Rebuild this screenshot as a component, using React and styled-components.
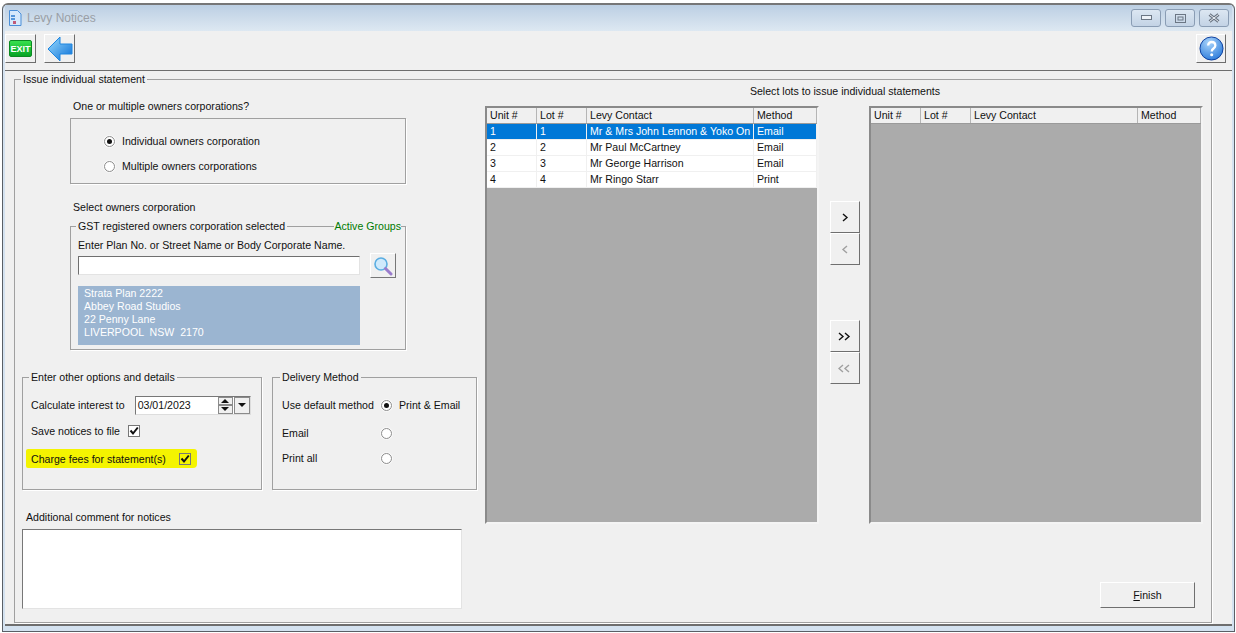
import React from 'react';
import styled, { createGlobalStyle } from 'styled-components';

const Global = createGlobalStyle`
  * { box-sizing: border-box; }
  html, body { margin: 0; background: #fff; }
  body { font-family: "Liberation Sans", Arial, sans-serif; font-size: 10.6px; color: #111; }
`;

const Screen = styled.div`
  width: 1236px;
  height: 633px;
  padding: 3px 1px 0 2px;
  overflow: hidden;
`;

const Frame = styled.div`
  height: 629px;
  border: 1px solid #5a5f66;
  border-top: 2px solid #777;
  border-radius: 6px 6px 0 0;
  background: #d4e2f0;
  padding: 0 2px 5px 2px;
  display: flex;
  flex-direction: column;
`;

const TitleBar = styled.div`
  height: 26px;
  flex: none;
  display: flex;
  align-items: center;
  padding: 0 3px 0 3px;
  background: linear-gradient(#bccfe3, #dde8f2);
`;

const TitleText = styled.span`
  font-size: 12px;
  color: #9a9fa6;
  margin-left: 5px;
`;

const WindowButtons = styled.div`
  margin-left: auto;
  display: flex;
  gap: 4px;
`;

const WindowButton = styled.div`
  width: 30px;
  height: 18px;
  display: flex;
  align-items: center;
  justify-content: center;
  border: 1px solid #8a9db4;
  border-radius: 3px;
  background: linear-gradient(#dce7f2, #c3d3e5);
`;

const Client = styled.div`
  flex: 1;
  display: flex;
  flex-direction: column;
  background: #f0f0f0;
`;

const Toolbar = styled.div`
  height: 40px;
  flex: none;
  display: flex;
  align-items: flex-start;
  padding: 3px 6px 0 0;
  gap: 8px;
  border-bottom: 1px solid #6e6e6e;
`;

const ToolButton = styled.div`
  width: ${p => (p.$push ? 30 : 31)}px;
  height: 29px;
  display: flex;
  align-items: center;
  justify-content: center;
  background: #f0f0f0;
  border: 1px solid;
  border-color: #fff #6d6d6d #6d6d6d #fff;
  margin-left: ${p => (p.$push ? 'auto' : '0')};
`;

const ExitBadge = styled.div`
  width: 23px;
  height: 17px;
  display: flex;
  align-items: center;
  justify-content: center;
  border: 1px solid #0b8a22;
  border-radius: 2px;
  background: linear-gradient(#38e04e, #06a324);
  color: #fff;
  font-size: 9px;
  font-weight: bold;
`;

const Body = styled.div`
  flex: 1;
  padding: 2px 20px 0 9px;
  border-bottom: 2px solid #6e6e6e;
`;

const Outer = styled.fieldset`
  margin: 0;
  height: 550px;
  padding: 0 8px 0 6px;
  border: 1px solid #a0a0a0;
  box-shadow: 1px 1px 0 #fff;
  display: flex;
  min-width: 0;
  position: relative;
`;

const Legend = styled.legend`
  padding: 0 2px;
  margin-left: ${p => p.$inset}px;
  line-height: 13px;
  white-space: nowrap;
`;

const Columns = styled.div`
  display: flex;
  margin-top: -2px;
  height: 100%;
`;

const LeftColumn = styled.div`
  width: 455px;
  flex: none;
  display: flex;
  flex-direction: column;
`;

const Caption = styled.div`
  line-height: 13px;
  margin: ${p => p.$margin || '0'};
`;

const PlainBox = styled.div`
  width: 336px;
  height: 66px;
  margin-left: 49px;
  border: 1px solid #a0a0a0;
  box-shadow: 1px 1px 0 #fff;
  display: flex;
  flex-direction: column;
  gap: 12px;
  padding: 16px 0 0 33px;
`;

const RadioRow = styled.label`
  display: flex;
  align-items: center;
  gap: ${p => p.$gap || 7}px;
  line-height: 13px;
`;

const RadioDot = styled.span`
  width: 11px;
  height: 11px;
  flex: none;
  border-radius: 50%;
  background: #fff;
  border: 1px solid #8d8d8d;
  box-shadow: 0 0 0 1px #f8f8f8;
  display: inline-flex;
  align-items: center;
  justify-content: center;
  &::after {
    content: '';
    width: 5px;
    height: 5px;
    border-radius: 50%;
    background: ${p => (p.$on ? '#111' : 'transparent')};
  }
`;

const Group = styled.fieldset`
  margin: ${p => p.$margin || '0'};
  padding: 0;
  width: ${p => p.$width}px;
  height: ${p => p.$height}px;
  border: 1px solid #a0a0a0;
  box-shadow: 1px 1px 0 #fff;
  position: relative;
  min-width: 0;
  flex: none;
`;

const ActiveGroups = styled.span`
  position: absolute;
  top: -13px;
  right: 4px;
  color: #007a00;
  background: #f0f0f0;
  line-height: 13px;
`;

const GroupBody = styled.div`
  padding: ${p => p.$padding || '0 0 0 7px'};
`;

const SearchRow = styled.div`
  display: flex;
  align-items: center;
  gap: 10px;
  margin-top: 1px;
`;

const SearchInput = styled.div`
  width: 282px;
  height: 19px;
  background: #fff;
  border: 1px solid;
  border-color: #6f6f6f #e3e3e3 #e3e3e3 #6f6f6f;
`;

const SearchButton = styled.div`
  width: 26px;
  height: 25px;
  display: flex;
  align-items: center;
  justify-content: center;
  border: 1px solid;
  border-color: #fff #777 #777 #fff;
`;

const AddressBlock = styled.div`
  width: 282px;
  height: 59px;
  margin-top: 8px;
  padding: 1px 6px;
  background: #9bb5d1;
  color: #fff;
  line-height: 13px;
  white-space: pre;
`;

const OptionRow = styled.div`
  display: flex;
  gap: 10px;
  margin-left: 1px;
  margin-top: 21px;
`;

const FieldRow = styled.div`
  display: flex;
  align-items: center;
  height: ${p => p.$height || 20}px;
  margin-top: ${p => p.$top || 0}px;
`;

const FieldLabel = styled.span`
  width: ${p => (p.$width ? `${p.$width}px` : 'auto')};
  flex: none;
  white-space: nowrap;
`;

const DateField = styled.div`
  width: 116px;
  height: 19px;
  display: flex;
  margin-left: 10px;
  background: #fff;
  border: 1px solid;
  border-color: #777 #ddd #ddd #777;
`;

const DateValue = styled.span`
  flex: 1;
  padding: 2px 0 0 2px;
  line-height: 13px;
`;

const Spinner = styled.div`
  width: 15px;
  display: flex;
  flex-direction: column;
`;

const SpinArrow = styled.div`
  flex: 1;
  background: #f0f0f0;
  border: 1px solid #8b8b8b;
  display: flex;
  align-items: center;
  justify-content: center;
  &::after {
    content: '';
    border-left: 4px solid transparent;
    border-right: 4px solid transparent;
    ${p => (p.$down ? 'border-top: 4px solid #111;' : 'border-bottom: 4px solid #111;')}
  }
`;

const DropArrow = styled(SpinArrow)`
  flex: none;
  width: 16px;
  margin-left: 1px;
`;

const Check = styled.span`
  width: 12px;
  height: 12px;
  flex: none;
  margin-left: ${p => p.$left || 0}px;
  border: 1px solid #777;
  background: ${p => p.$bg || '#fff'};
  display: inline-flex;
  align-items: center;
  justify-content: center;
`;

const Highlight = styled.div`
  display: flex;
  align-items: center;
  width: 171px;
  height: 19px;
  margin: 8px 0 0 3px;
  padding-left: 5px;
  background: #f4f400;
  border-radius: 2px 3px 4px 2px;
`;

const CommentBox = styled.div`
  width: 440px;
  height: 80px;
  margin: 5px 0 0 1px;
  background: #fff;
  border: 1px solid;
  border-color: #777 #e3e3e3 #e3e3e3 #777;
`;

const RightColumn = styled.div`
  flex: 1;
  display: flex;
  flex-direction: column;
  position: relative;
`;

const ListsTitle = styled.div`
  text-align: center;
  line-height: 13px;
  padding: 1px 0 0 11px;
`;

const ListsRow = styled.div`
  display: flex;
  margin: 8px 0 0 9px;
`;

const ListBox = styled.div`
  width: 334px;
  height: 418px;
  background: #ababab;
  border: 2px solid;
  border-color: #8a8a8a #f4f4f4 #f4f4f4 #8a8a8a;
`;

const Cells = styled.div`
  display: grid;
  grid-template-columns: 50px 50px 167px 1fr;
  height: 16px;
  line-height: 15px;
  background: ${p => (p.$selected ? '#0078d7' : p.$head ? '#f0f0f0' : '#fff')};
  color: ${p => (p.$selected ? '#fff' : '#111')};
  border-bottom: 1px solid ${p => (p.$head ? '#9a9a9a' : '#f0f0f0')};
`;

const Cell = styled.div`
  padding-left: 3px;
  overflow: hidden;
  white-space: nowrap;
  border-right: 1px solid ${p => (p.$head ? '#b5b5b5' : '#f0f0f0')};
`;

const MoveColumn = styled.div`
  width: 50px;
  flex: none;
  padding: 95px 0 0 11px;
`;

const MoveButton = styled.div`
  width: 30px;
  height: 32px;
  margin-top: ${p => p.$top || 0}px;
  display: flex;
  align-items: center;
  justify-content: center;
  background: #f0f0f0;
  border: 1px solid;
  border-color: #fff #6f6f6f #6f6f6f #fff;
  color: ${p => (p.$off ? '#a0a0a0' : '#111')};
`;

const FinishButton = styled.div`
  position: absolute;
  right: 8px;
  bottom: 12px;
  width: 95px;
  height: 26px;
  display: flex;
  align-items: center;
  justify-content: center;
  border: 1px solid;
  border-color: #fff #6f6f6f #6f6f6f #fff;
`;

const DocIcon = () => (
  <svg width="14" height="16" viewBox="0 0 14 16">
    <path d="M1.500.5h8l3.500 3.500v11.500h-11.500z" fill="#d5e8fb" stroke="#4b8fd8" />
    <path d="M3 6h4M3 9h4" stroke="#2b7bd0" strokeWidth="1.500" />
    <path d="M5 11h3v3h-3z" fill="#c05a78" />
  </svg>
);

const BackIcon = () => (
  <svg width="26" height="26" viewBox="0 0 26 26">
    <defs>
      <linearGradient id="backFill" x1="0" y1="0" x2="1" y2="1">
        <stop offset="0" stopColor="#9adcff" />
        <stop offset="1" stopColor="#0a6fd6" />
      </linearGradient>
    </defs>
    <path d="M1 13 13 1v7h12v10H13v7z" fill="url(#backFill)" stroke="#1f86e0" strokeLinejoin="round" />
  </svg>
);

const HelpIcon = () => (
  <svg width="25" height="25" viewBox="0 0 26 26">
    <defs>
      <radialGradient id="helpFill" cx=".4" cy=".25" r=".9">
        <stop offset="0" stopColor="#a9d4fb" />
        <stop offset="1" stopColor="#1b6fd6" />
      </radialGradient>
    </defs>
    <circle cx="13" cy="13" r="12" fill="url(#helpFill)" stroke="#0c3d9c" />
    <path d="M9.500 10c0-5 7.500-5 7.500 0 0 3-3.800 3-3.800 6" fill="none" stroke="#fff" strokeWidth="2.400" />
    <circle cx="13.200" cy="19.500" r="1.600" fill="#fff" />
  </svg>
);

const SearchIcon = () => (
  <svg width="20" height="20" viewBox="0 0 20 20">
    <circle cx="8" cy="8" r="6" fill="#cfeafc" stroke="#5aaee2" strokeWidth="1.600" />
    <path d="M12.500 12.500 18 18" stroke="#9a7ccc" strokeWidth="3" strokeLinecap="round" />
  </svg>
);

const CheckMark = () => (
  <svg width="10" height="10" viewBox="0 0 10 10">
    <path d="M1.500 4.500 4 7.500 8.800 1.500" fill="none" stroke="#111" strokeWidth="2" />
  </svg>
);

const Chevrons = ({ dir, count }) => (
  <svg width="14" height="9" viewBox="0 0 14 9">
    {Array.from({ length: count }).map((_, i) => {
      const x = count === 1 ? 5 : 1 + i * 6;
      const d = dir === 'right'
        ? `M${x} 1l4 3.500-4 3.500`
        : `M${x + 4} 1l-4 3.500 4 3.500`;
      return <path key={i} d={d} fill="none" stroke="currentColor" strokeWidth="1.400" />;
    })}
  </svg>
);

const heads = ['Unit #', 'Lot #', 'Levy Contact', 'Method'];
const lots = [
  ['1', '1', 'Mr & Mrs John Lennon & Yoko On', 'Email'],
  ['2', '2', 'Mr Paul McCartney', 'Email'],
  ['3', '3', 'Mr George Harrison', 'Email'],
  ['4', '4', 'Mr Ringo Starr', 'Print'],
];

const HeadRow = () => (
  <Cells $head>
    {heads.map(h => <Cell $head key={h}>{h}</Cell>)}
  </Cells>
);

export default function App() {
  return (
    <Screen>
      <Global />
      <Frame>
        <TitleBar>
          <DocIcon />
          <TitleText>Levy Notices</TitleText>
          <WindowButtons>
            <WindowButton>
              <svg width="11" height="6"><rect x=".5" y=".5" width="10" height="4" fill="#eef3f8" stroke="#6b7684" /></svg>
            </WindowButton>
            <WindowButton>
              <svg width="11" height="9"><rect x=".5" y=".5" width="10" height="8" fill="none" stroke="#6b7684" /><rect x="3" y="3" width="5" height="3" fill="none" stroke="#6b7684" /></svg>
            </WindowButton>
            <WindowButton>
              <svg width="12" height="10"><path d="M1.500 1.500l9 7M10.500 1.500l-9 7" stroke="#6b7684" strokeWidth="3" /><path d="M1.500 1.500l9 7M10.500 1.500l-9 7" stroke="#eef3f8" strokeWidth="1" /></svg>
            </WindowButton>
          </WindowButtons>
        </TitleBar>
        <Client>
          <Toolbar>
            <ToolButton><ExitBadge>EXIT</ExitBadge></ToolButton>
            <ToolButton><BackIcon /></ToolButton>
            <ToolButton $push><HelpIcon /></ToolButton>
          </Toolbar>
          <Body>
            <Outer>
              <Legend $inset={0}>Issue individual statement</Legend>
              <Columns>
                <LeftColumn>
                  <Caption $margin="16px 0 5px 52px">One or multiple owners corporations?</Caption>
                  <PlainBox>
                    <RadioRow><RadioDot $on />Individual owners corporation</RadioRow>
                    <RadioRow><RadioDot />Multiple owners corporations</RadioRow>
                  </PlainBox>
                  <Caption $margin="17px 0 6px 52px">Select owners corporation</Caption>
                  <Group $width={336} $height={130} $margin="0 0 0 49px">
                    <Legend $inset={5}>GST registered owners corporation selected</Legend>
                    <ActiveGroups>Active Groups</ActiveGroups>
                    <GroupBody>
                      <Caption $margin="6px 0 0 0">Enter Plan No. or Street Name or Body Corporate Name.</Caption>
                      <SearchRow>
                        <SearchInput />
                        <SearchButton><SearchIcon /></SearchButton>
                      </SearchRow>
                      <AddressBlock>{'Strata Plan 2222\nAbbey Road Studios\n22 Penny Lane\nLIVERPOOL  NSW  2170'}</AddressBlock>
                    </GroupBody>
                  </Group>
                  <OptionRow>
                    <Group $width={240} $height={119}>
                      <Legend $inset={6}>Enter other options and details</Legend>
                      <GroupBody $padding="11px 0 0 8px">
                        <FieldRow>
                          <FieldLabel>Calculate interest to</FieldLabel>
                          <DateField>
                            <DateValue>03/01/2023</DateValue>
                            <Spinner><SpinArrow /><SpinArrow $down /></Spinner>
                            <DropArrow $down />
                          </DateField>
                        </FieldRow>
                        <FieldRow $top={6}>
                          <FieldLabel>Save notices to file</FieldLabel>
                          <Check $left={8}><CheckMark /></Check>
                        </FieldRow>
                      </GroupBody>
                      <Highlight>
                        <FieldLabel>Charge fees for statement(s)</FieldLabel>
                        <Check $left={13} $bg="#f4f400"><CheckMark /></Check>
                      </Highlight>
                    </Group>
                    <Group $width={205} $height={119}>
                      <Legend $inset={7}>Delivery Method</Legend>
                      <GroupBody $padding="11px 0 0 9px">
                        <FieldRow>
                          <FieldLabel $width={99}>Use default method</FieldLabel>
                          <RadioRow $gap={7}><RadioDot $on />Print &amp; Email</RadioRow>
                        </FieldRow>
                        <FieldRow $top={8}>
                          <FieldLabel $width={99}>Email</FieldLabel>
                          <RadioDot />
                        </FieldRow>
                        <FieldRow $top={5}>
                          <FieldLabel $width={99}>Print all</FieldLabel>
                          <RadioDot />
                        </FieldRow>
                      </GroupBody>
                    </Group>
                  </OptionRow>
                  <Caption $margin="21px 0 0 5px">Additional comment for notices</Caption>
                  <CommentBox />
                </LeftColumn>
                <RightColumn>
                  <ListsTitle>Select lots to issue individual statements</ListsTitle>
                  <ListsRow>
                    <ListBox>
                      <HeadRow />
                      {lots.map((row, i) => (
                        <Cells key={row[0]} $selected={i === 0}>
                          {row.map((v, j) => <Cell key={j}>{v}</Cell>)}
                        </Cells>
                      ))}
                    </ListBox>
                    <MoveColumn>
                      <MoveButton><Chevrons dir="right" count={1} /></MoveButton>
                      <MoveButton $off><Chevrons dir="left" count={1} /></MoveButton>
                      <MoveButton $top={55}><Chevrons dir="right" count={2} /></MoveButton>
                      <MoveButton $off><Chevrons dir="left" count={2} /></MoveButton>
                    </MoveColumn>
                    <ListBox>
                      <HeadRow />
                    </ListBox>
                  </ListsRow>
                  <FinishButton><span><u>F</u>inish</span></FinishButton>
                </RightColumn>
              </Columns>
            </Outer>
          </Body>
        </Client>
      </Frame>
    </Screen>
  );
}
